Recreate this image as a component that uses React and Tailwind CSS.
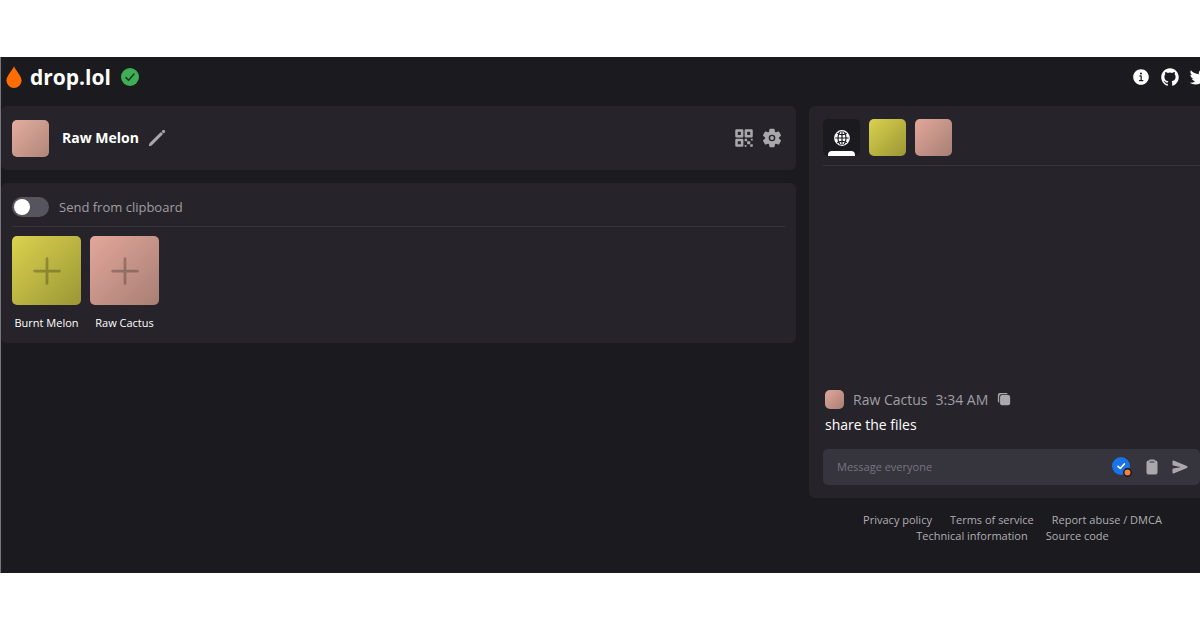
import React, { useState } from 'react';
import {
  IoAdd,
  IoClipboard,
  IoCopy,
  IoGlobe,
  IoInformationCircle,
  IoLogoGithub,
  IoLogoTwitter,
  IoPencil,
  IoQrCode,
  IoSend,
} from 'react-icons/io5';

const peers = [
  { name: 'Burnt Melon', color: 'from-[#dbd24f] to-[#9b9735]' },
  { name: 'Raw Cactus', color: 'from-[#e3a79b] to-[#a87f74]' },
];

const footerLinks = [
  ['Privacy policy', 'Terms of service', 'Report abuse / DMCA'],
  ['Technical information', 'Source code'],
];

const teeth = [0, 60, 120, 180, 240, 300];

const GearIcon = () => (
  <svg className="h-5 w-5" viewBox="0 0 20 20" fill="currentColor" aria-hidden="true">
    {teeth.map((angle) => (
      <path
        key={angle}
        d="M8.2 1.6h3.6l.7 4h-5z"
        transform={`rotate(${angle} 10 10)`}
        stroke="currentColor"
        strokeWidth="1.6"
        strokeLinejoin="round"
      />
    ))}
    <circle cx="10" cy="10" r="6.8" />
    <circle cx="10" cy="10" r="2.6" fill="none" stroke="#26242a" strokeWidth="1.4" />
  </svg>
);

const Header = () => (
  <header className="flex h-[49px] items-center justify-between overflow-hidden pb-[9px] pl-[5px]">
    <div className="flex items-center">
      <svg className="h-[22px] w-4" viewBox="0 0 16 22" aria-hidden="true">
        <path d="M8 0C8.7 3.5 15.6 9.5 15.6 14.6A7.6 7.4 0 0 1 .4 14.6C.4 9.5 7.3 3.5 8 0Z" fill="#ff6d00" />
      </svg>
      <h1 className="ml-2 text-[21px] leading-7 font-bold text-white">drop.lol</h1>
      <svg className="ml-[10px] h-[18px] w-[18px]" viewBox="0 0 18 18" role="img" aria-label="Connected">
        <circle cx="9" cy="9" r="9" fill="#3fae55" />
        <path
          d="M5 9.6 7.6 12.2 13 6"
          fill="none"
          stroke="#1a3a22"
          strokeWidth="1.5"
          strokeLinecap="round"
          strokeLinejoin="round"
        />
      </svg>
    </div>
    <nav className="-mr-[9px] flex shrink-0 items-center gap-2 text-white">
      <a href="#about" aria-label="About">
        <IoInformationCircle className="h-5 w-5" />
      </a>
      <a href="#github" aria-label="GitHub">
        <IoLogoGithub className="mx-px h-5 w-5" />
      </a>
      <a href="#twitter" aria-label="Twitter">
        <IoLogoTwitter className="h-5 w-5" />
      </a>
    </nav>
  </header>
);

const ProfilePanel = () => (
  <section className="flex h-16 items-center rounded-md bg-[#26242a] px-[11px]">
    <div className="h-[37px] w-[37px] rounded-[5px] bg-linear-to-br from-[#e3ada0] to-[#b08779]" />
    <h2 className="ml-[13px] text-[14px] leading-5 font-bold text-white">Raw Melon</h2>
    <button type="button" aria-label="Edit name" className="ml-2 text-[#aaa8ad]">
      <IoPencil className="h-5 w-5" />
    </button>
    <div className="ml-auto flex gap-2 pr-[3px] text-[#aaa8ad]">
      <button type="button" aria-label="Show QR code">
        <IoQrCode className="h-5 w-5" />
      </button>
      <button type="button" aria-label="Settings">
        <GearIcon />
      </button>
    </div>
  </section>
);

const SendPanel = () => {
  const [fromClipboard, setFromClipboard] = useState(false);

  return (
    <section className="rounded-md bg-[#26242a] px-[11px] pb-[10px]">
      <label className="flex h-11 items-center border-b border-[#37353b] pt-1">
        <input
          type="checkbox"
          checked={fromClipboard}
          onChange={(e) => setFromClipboard(e.target.checked)}
          className="peer sr-only"
        />
        <span className="flex h-5 w-[37px] items-center rounded-full bg-[#56545d] px-[2px] peer-checked:justify-end">
          <span className="h-4 w-4 rounded-full bg-white" />
        </span>
        <span className="ml-[10px] text-[13px] leading-5 text-[#a09ea4]">Send from clipboard</span>
      </label>

      <div className="flex gap-[9px] pt-[9px]">
        {peers.map((peer) => (
          <button key={peer.name} type="button" className="flex w-[69px] flex-col items-center">
            <span
              className={`flex h-[69px] w-[69px] items-center justify-center rounded-[5px] bg-linear-to-br ${peer.color}`}
            >
              <IoAdd className="h-11 w-11 text-black/25" />
            </span>
            <span className="mt-2 text-[11px] leading-5 whitespace-nowrap text-white">{peer.name}</span>
          </button>
        ))}
      </div>
    </section>
  );
};

const ChatPanel = () => {
  const [message, setMessage] = useState('');

  return (
    <section className="flex min-h-[392px] flex-col rounded-l-md bg-[#26242a] pb-[13px] pl-[14px]">
      {/* Channels */}
      <div className="flex gap-[9px] border-b border-[#37353b] pt-[13px] pb-[9px]">
        <button
          type="button"
          aria-label="Everyone"
          className="flex h-[37px] w-[37px] flex-col items-center justify-between rounded-[5px] bg-[#1b1a1e] pt-[10px] text-white"
        >
          <IoGlobe className="h-[18px] w-[18px]" />
          <span className="h-[5px] w-[27px] rounded-t-[4px] bg-white" />
        </button>
        {peers.map((peer) => (
          <button
            key={peer.name}
            type="button"
            aria-label={peer.name}
            className={`h-[37px] w-[37px] rounded-[5px] bg-linear-to-br ${peer.color}`}
          />
        ))}
      </div>

      {/* Messages */}
      <div className="mt-auto pb-3 pl-[2px]">
        <div className="flex h-6 items-center text-[14px] text-[#a09ea4]">
          <span className="h-[19px] w-[19px] rounded-[5px] bg-linear-to-br from-[#e3a79b] to-[#a87f74]" />
          <span className="ml-[9px]">Raw Cactus</span>
          <span className="ml-2">3:34 AM</span>
          <button type="button" aria-label="Copy message" className="ml-[9px] text-[#aaa8ad]">
            <IoCopy className="h-[14px] w-[14px]" />
          </button>
        </div>
        <p className="pt-[2px] text-[14px] leading-6 text-white">share the files</p>
      </div>

      <form
        onSubmit={(e) => e.preventDefault()}
        className="flex h-9 items-center rounded-[5px] bg-[#36343d] pr-3 pl-[14px]"
      >
        <input
          type="text"
          aria-label="Message everyone"
          placeholder="Message everyone"
          value={message}
          onChange={(e) => setMessage(e.target.value)}
          className="min-w-0 flex-1 bg-transparent text-[11px] text-white outline-none placeholder:text-[#77757d]"
        />
        <svg className="h-5 w-5" viewBox="0 0 20 20" aria-hidden="true">
          <circle cx="9" cy="9" r="9" fill="#1a73e8" />
          <path
            d="M6 9.3 8.3 11.5 12.3 7"
            fill="none"
            stroke="#fff"
            strokeWidth="1.7"
            strokeLinecap="round"
            strokeLinejoin="round"
          />
          <circle cx="15.5" cy="15.5" r="3.7" fill="#f5813b" stroke="#15131a" strokeWidth="1.4" />
        </svg>
        <button type="button" aria-label="Send clipboard" className="ml-3 text-[#aaa8ad]">
          <IoClipboard className="h-4 w-4" />
        </button>
        <button type="submit" aria-label="Send" className="ml-3 text-[#aaa8ad]">
          <IoSend className="h-4 w-4" />
        </button>
      </form>
    </section>
  );
};

const Footer = () => (
  <footer className="flex flex-col items-center pt-[14px] pb-[29px] pl-4 text-[11px] leading-4 text-[#b0aeb4]">
    {footerLinks.map((row) => (
      <div key={row[0]} className="flex gap-[18px] whitespace-nowrap">
        {row.map((link) => (
          <a key={link} href="#footer">
            {link}
          </a>
        ))}
      </div>
    ))}
  </footer>
);

const App = () => (
  <div className="bg-white py-[57px] font-['Open_Sans','Noto_Sans',sans-serif]">
    <div className="border-l border-[#77757d] bg-[#1b1a1e]">
      <Header />
      <main className="flex gap-[13px]">
        <div className="flex min-w-0 flex-1 flex-col gap-[13px]">
          <ProfilePanel />
          <SendPanel />
        </div>
        <aside className="w-[391px] shrink-0">
          <ChatPanel />
          <Footer />
        </aside>
      </main>
    </div>
  </div>
);

export default App;
